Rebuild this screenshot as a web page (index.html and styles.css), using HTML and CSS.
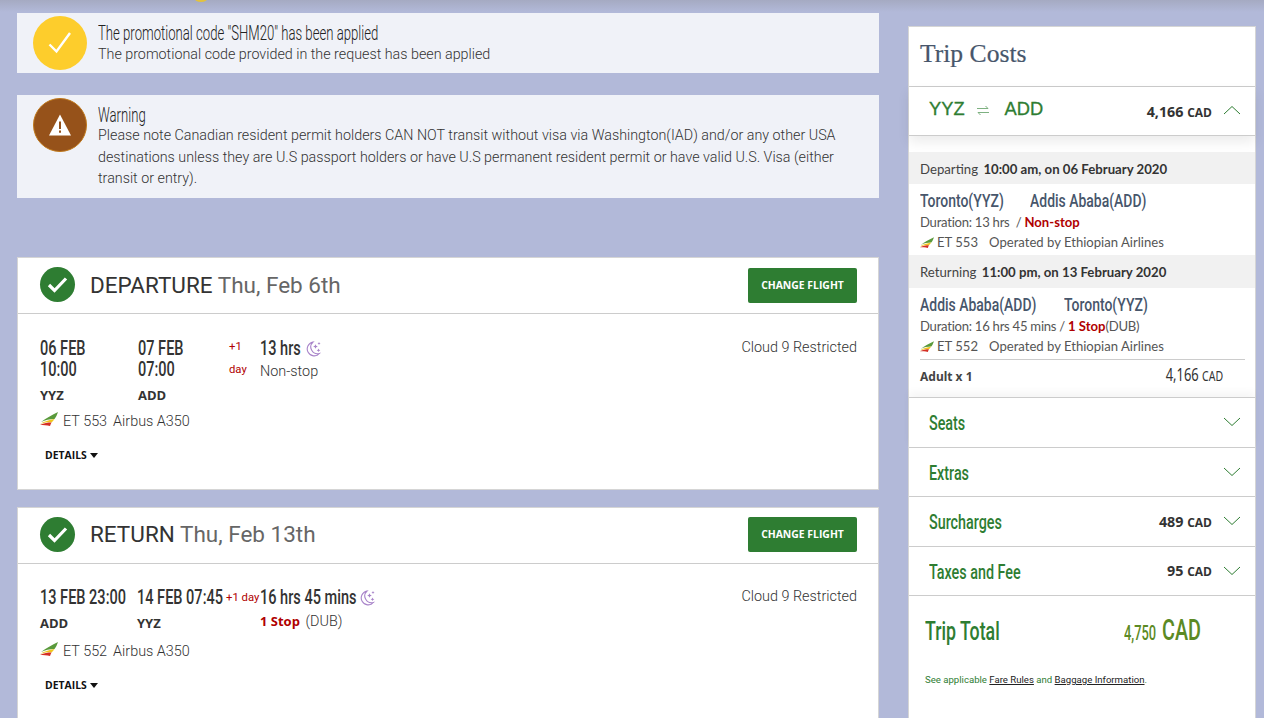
FILE: index.html
```html
<!DOCTYPE html>
<html lang="en">
<head>
    <meta charset="UTF-8">
    <meta name="viewport" content="width=device-width, initial-scale=1.0">
    <title>Review Trip</title>
    <link rel="stylesheet" href="styles.css">
</head>
<body>

<svg class="sprites" width="0" height="0" aria-hidden="true">
    <symbol id="tail" viewBox="0 0 18 15">
        <path d="M1 10C6 6 12 3 18 0C17 3 16 5 14.5 7C10 7 5 8 1 10Z" fill="#5a9a3c"/>
        <path d="M0 12C4 9.5 9 8 14.5 7C13.5 8.5 12.5 9.5 11.5 10.5C8 10 4 10.5 0 12Z" fill="#f0c61e"/>
        <path d="M0 13C4 11 8 10.5 11.5 10.5C11 11.5 10.5 12.5 10 14C7 13 3 13 0 13Z" fill="#d42e23"/>
    </symbol>
    <symbol id="moon" viewBox="0 0 16 16">
        <path d="M8 1A7 7 0 1 0 14.5 12.5A6.8 6.8 0 0 1 8 1Z" fill="none" stroke="#a883c9" stroke-width="1.1"/>
        <path d="M10.5 3.2l.7 1.6 1.6.7-1.6.7-.7 1.6-.7-1.6-1.6-.7 1.6-.7ZM14 1l.5 1 1 .5-1 .5-.5 1-.5-1-1-.5 1-.5ZM13.5 7.5l.6 1.2 1.2.6-1.2.6-.6 1.2-.6-1.2-1.2-.6 1.2-.6Z" fill="#a883c9"/>
    </symbol>
    <symbol id="tick" viewBox="0 0 35 35">
        <path d="M9 18L14.5 23.5L26 11.5" fill="none" stroke="#fff" stroke-width="3.2"/>
    </symbol>
    <symbol id="chev" viewBox="0 0 18 10">
        <path d="M1 1L9 8.5L17 1" fill="none" stroke="#2e7d32" stroke-width="1"/>
    </symbol>
</svg>

<div class="top-dot"></div>

<div class="page">
    <main class="left">
        <div class="alert">
            <span class="alert-icon promo">
                <svg width="30" height="30" viewBox="0 0 30 30"><path d="M4.5 16.5L11.5 23.5L25 5" fill="none" stroke="#fff" stroke-width="2.4"/></svg>
            </span>
            <div class="alert-text">
                <h3>The promotional code "SHM20" has been applied</h3>
                <p>The promotional code provided in the request has been applied</p>
            </div>
        </div>

        <div class="alert warn">
            <span class="alert-icon warning">
                <svg width="24" height="24" viewBox="0 0 24 24"><path d="M12 1.5L23 22.5H1Z" fill="#fff"/><path d="M11 8.5h2v7.5h-2ZM11 17.6h2v2.2h-2Z" fill="#96521a"/></svg>
            </span>
            <div class="alert-text">
                <h3>Warning</h3>
                <p class="long">Please note Canadian resident permit holders CAN NOT transit without visa via Washington(IAD) and/or any other USA destinations unless they are U.S passport holders or have U.S permanent resident permit or have valid U.S. Visa (either transit or entry).</p>
            </div>
        </div>

        <section class="flight-card">
            <div class="flight-head">
                <span class="check"><svg width="35" height="35"><use href="#tick"/></svg></span>
                <h2>DEPARTURE <span>Thu, Feb 6th</span></h2>
                <button class="change-btn">CHANGE FLIGHT</button>
            </div>
            <div class="flight-body">
                <div class="times">
                    <div>
                        <div class="cond stamp">06 FEB<br>10:00</div>
                        <div class="code">YYZ</div>
                    </div>
                    <div>
                        <div class="cond stamp">07 FEB<br>07:00</div>
                        <div class="code">ADD</div>
                    </div>
                    <div class="plus stacked">+1<br>day</div>
                    <div>
                        <div class="dur-line"><span class="cond dur dur-short">13 hrs</span><svg width="16" height="16"><use href="#moon"/></svg></div>
                        <div class="stops">Non-stop</div>
                    </div>
                    <div class="fare">Cloud 9 Restricted</div>
                </div>
                <div class="carrier"><svg width="18" height="15"><use href="#tail"/></svg><span>ET 553</span><span>Airbus A350</span></div>
                <div class="details">DETAILS <i class="caret"></i></div>
            </div>
        </section>

        <section class="flight-card second">
            <div class="flight-head">
                <span class="check"><svg width="35" height="35"><use href="#tick"/></svg></span>
                <h2>RETURN <span>Thu, Feb 13th</span></h2>
                <button class="change-btn">CHANGE FLIGHT</button>
            </div>
            <div class="flight-body ret">
                <div class="times">
                    <div>
                        <div class="cond stamp">13 FEB 23:00</div>
                        <div class="code">ADD</div>
                    </div>
                    <div>
                        <div class="cond stamp">14 FEB 07:45</div>
                        <div class="code">YYZ</div>
                    </div>
                    <div class="plus">+1 day</div>
                    <div>
                        <div class="dur-line"><span class="cond dur dur-long">16 hrs 45 mins</span><svg width="16" height="16"><use href="#moon"/></svg></div>
                        <div class="stops"><b>1 Stop</b> (DUB)</div>
                    </div>
                    <div class="fare">Cloud 9 Restricted</div>
                </div>
                <div class="carrier"><svg width="18" height="15"><use href="#tail"/></svg><span>ET 552</span><span>Airbus A350</span></div>
                <div class="details">DETAILS <i class="caret"></i></div>
            </div>
        </section>
    </main>

    <aside class="costs">
        <h2 class="costs-title">Trip Costs</h2>
        <div class="route-row">
            <span class="route">YYZ</span>
            <svg class="swap" width="12" height="11" viewBox="0 0 12 11"><path d="M0 3.5H11M8.5 1L11 3.5M12 7.5H1M3.5 10L1 7.5" fill="none" stroke="#6fa873" stroke-width="0.9"/></svg>
            <span class="route">ADD</span>
            <span class="amount">4,166 <small>CAD</small></span>
            <svg class="chev up" width="18" height="10"><use href="#chev"/></svg>
        </div>

        <div class="itinerary">
            <div class="band">Departing <b>10:00 am, on 06 February 2020</b></div>
            <div class="leg">
                <div class="cities"><span class="cond city-short">Toronto(YYZ)</span><span class="cond city-long">Addis Ababa(ADD)</span></div>
                <div class="leg-line time-line">Duration: 13 hrs &nbsp;/ <b>Non-stop</b></div>
                <div class="leg-line op"><svg width="14" height="12"><use href="#tail"/></svg><span>ET 553</span><span>Operated by Ethiopian Airlines</span></div>
            </div>
            <div class="band back">Returning <b>11:00 pm, on 13 February 2020</b></div>
            <div class="leg">
                <div class="cities"><span class="cond city-long">Addis Ababa(ADD)</span><span class="cond city-short">Toronto(YYZ)</span></div>
                <div class="leg-line time-line">Duration: 16 hrs 45 mins / <b>1 Stop</b>(DUB)</div>
                <div class="leg-line op"><svg width="14" height="12"><use href="#tail"/></svg><span>ET 552</span><span>Operated by Ethiopian Airlines</span></div>
            </div>
            <div class="adult">
                <b>Adult x 1</b>
                <span class="cond adult-price">4,166 <small>CAD</small></span>
            </div>
        </div>

        <div class="cost-row first"><span class="cond cost-label">Seats</span><svg class="chev" width="18" height="10"><use href="#chev"/></svg></div>
        <div class="cost-row"><span class="cond cost-label">Extras</span><svg class="chev" width="18" height="10"><use href="#chev"/></svg></div>
        <div class="cost-row"><span class="cond cost-label">Surcharges</span><span class="amount">489 <small>CAD</small></span><svg class="chev" width="18" height="10"><use href="#chev"/></svg></div>
        <div class="cost-row"><span class="cond cost-label">Taxes and Fee</span><span class="amount">95 <small>CAD</small></span><svg class="chev" width="18" height="10"><use href="#chev"/></svg></div>

        <div class="total">
            <span class="total-label-box"><span class="cond total-label">Trip Total</span></span>
            <span class="cond total-value">4,750 <big>CAD</big></span>
        </div>
        <p class="rules">See applicable <a href="#">Fare Rules</a> and <a href="#">Baggage Information</a>.</p>
    </aside>
</div>

</body>
</html>
```

FILE: styles.css
```css
html, body {
    margin: 0;
    padding: 0;
    height: 718px;
    overflow: hidden;
}
body {
    background: #b2b9d9;
    font-family: Roboto, "Liberation Sans", sans-serif;
    color: #333;
    position: relative;
}
body::before {
    content: "";
    position: absolute;
    top: 0;
    left: 0;
    right: 0;
    height: 12px;
    background: linear-gradient(to bottom, #a5aac2, #b2b9d9);
}
.sprites {
    position: absolute;
}
.top-dot {
    position: absolute;
    top: -7px;
    left: 194px;
    width: 14px;
    height: 9px;
    border-radius: 50%;
    background: #e2c23e;
}
.page {
    display: flex;
    align-items: flex-start;
    height: 718px;
    box-sizing: border-box;
    overflow: hidden;
    padding: 13px 8px 0 17px;
    position: relative;
}
.left {
    width: 862px;
    flex: none;
}

/* no condensed face is installed, so narrow the regular one */
.cond {
    display: inline-block;
    font-weight: 500;
    white-space: nowrap;
    transform: scaleX(0.745);
    transform-origin: left center;
}

/* alerts */
.alert {
    display: flex;
    background: #f0f2f8;
    height: 60px;
    margin-bottom: 22px;
}
.alert.warn {
    height: 103px;
    margin-bottom: 59px;
}
.alert-icon {
    width: 54px;
    height: 54px;
    border-radius: 50%;
    margin: 3px 0 0 16px;
    flex: none;
    display: flex;
    align-items: center;
    justify-content: center;
}
.promo {
    background: #fdcd2c;
}
.warning {
    background: #96521a;
    border: 1px solid #c0791c;
    box-sizing: border-box;
}
.alert-text {
    margin-left: 11px;
}
.alert-text h3 {
    margin: 8px 0 0;
    font-size: 20px;
    font-weight: 300;
    line-height: 24px;
    color: #222;
    white-space: nowrap;
    transform: scaleX(0.657);
    transform-origin: left center;
}
.alert-text p {
    margin: 0;
    font-size: 14.3px;
    line-height: 19px;
    color: #333;
    font-weight: 300;
}
.alert-text p.long {
    line-height: 21.5px;
    width: 765px;
    margin-top: -2px;
}
.warn h3 {
    margin-top: 9px;
    line-height: 23px;
}

/* flight cards */
.flight-card {
    background: #fff;
    border: 1px solid #d5d5d5;
    box-sizing: border-box;
    height: 233px;
    margin-bottom: 17px;
}
.flight-card.second {
    height: 211px;
    margin-bottom: 0;
    border-bottom: none;
}
.flight-head {
    display: flex;
    align-items: center;
    height: 53px;
    padding: 0 21px 2px 22px;
    border-bottom: 1px solid #ccc;
}
.check {
    width: 35px;
    height: 35px;
    border-radius: 50%;
    background: #2e7d32;
    flex: none;
}
.flight-head h2 {
    margin: 0 0 0 15px;
    font-size: 22.5px;
    font-weight: 400;
    color: #333;
    flex: 1;
}
.second .flight-head h2 {
    margin-top: -2px;
}
.flight-head h2 span {
    color: #666;
}
.change-btn {
    background: #2e7d32;
    color: #fff;
    border: none;
    border-radius: 2px;
    width: 109px;
    height: 35px;
    margin-top: 1px;
    padding: 0;
    font: 700 10.4px "Open Sans", sans-serif;
}
.second .change-btn {
    margin-top: -1px;
}
.flight-body {
    padding: 24px 21px 0 22px;
}
.flight-body.ret {
    padding-top: 23px;
}
.times {
    display: grid;
    grid-template-columns: 98px 90px 32px 1fr auto;
}
.ret .times {
    grid-template-columns: 97px 89px 34px 1fr auto;
}
.stamp, .dur {
    font-size: 19.5px;
    line-height: 21px;
    color: #333;
}
.code {
    font: 700 13px/16px "Open Sans", sans-serif;
    margin-top: 7px;
}
.plus {
    color: #b00000;
    font-size: 11.3px;
    line-height: 21px;
}
.plus.stacked {
    line-height: 22.5px;
    margin-top: -2px;
    padding-left: 1px;
}
.dur-line {
    display: flex;
    align-items: center;
}
.dur-short {
    width: 45px;
}
.dur-long {
    width: 99px;
}
.stops {
    font-size: 14.4px;
    font-weight: 300;
    line-height: 20px;
    margin-top: 3px;
}
.ret .stops {
    margin-top: 4px;
}
.stops b {
    color: #b00000;
    font: 700 13px "Open Sans", sans-serif;
    margin-right: 2px;
}
.fare {
    font-size: 14.4px;
    font-weight: 300;
    line-height: 20px;
}
.carrier {
    display: flex;
    align-items: center;
    gap: 6px;
    font-size: 14.4px;
    font-weight: 300;
    height: 20px;
    margin-top: 8px;
}
.carrier svg {
    margin: -4px -1px 0 0;
}
.ret .carrier {
    margin-top: 9px;
}
.details {
    font: 700 10.4px "Open Sans", sans-serif;
    color: #111;
    margin: 17px 0 0 5px;
}
.caret {
    display: inline-block;
    border: 4px solid transparent;
    border-top: 5px solid #111;
    border-bottom: 0;
    vertical-align: 1px;
    margin-left: 1px;
}

/* trip costs */
.costs {
    width: 348px;
    margin: 13px 0 0 29px;
    background: #fff;
    border: 1px solid #d5d5d5;
    border-bottom: none;
    box-sizing: border-box;
    height: 692px;
    flex: none;
}
.costs-title {
    margin: 0;
    height: 59px;
    padding-left: 11px;
    font: 400 25.6px/53px "Liberation Serif", serif;
    color: #47566b;
    -webkit-text-stroke: 0.2px #47566b;
    border-bottom: 1px solid #ccc;
}
.route-row {
    display: flex;
    align-items: center;
    height: 48px;
    padding: 0 14px 0 20px;
    border-bottom: 1px solid #ccc;
    box-shadow: 0 6px 12px rgba(0, 0, 0, 0.08);
    position: relative;
}
.route {
    font: 400 18.3px "Liberation Sans", sans-serif;
    color: #2e7d32;
    -webkit-text-stroke: 0.3px #2e7d32;
    margin-top: -5px;
}
.swap {
    margin: -2px 16px 0 12px;
}
.amount {
    margin-left: auto;
    font: 700 14.3px "Open Sans", sans-serif;
    color: #333;
}
.amount small {
    font-size: 12px;
}
.chev {
    margin-left: 11px;
}
.chev.up {
    transform: rotate(180deg);
    margin-top: -3px;
}
.itinerary {
    padding-top: 16px;
}
.band {
    background: #f1f1f1;
    height: 32px;
    padding-left: 11px;
    font: 400 13.2px/34px Lato, sans-serif;
    color: #444;
}
.band.back {
    height: 33px;
}
.band b {
    margin-left: 2px;
    color: #333;
}
.leg {
    padding: 6px 0 0 11px;
    height: 65px;
}
.cities {
    display: flex;
    gap: 26px;
}
.cities .cond {
    font-size: 18.5px;
    line-height: 22px;
    color: #47566b;
    transform: scaleX(0.755);
}
.city-short {
    width: 84px;
}
.city-long {
    width: 118px;
}
.leg-line {
    font: 400 13.1px/19px Lato, sans-serif;
    color: #555;
    margin-top: 1px;
}
.time-line {
    letter-spacing: -0.26px;
}
.leg-line b {
    color: #b00000;
    letter-spacing: 0;
}
.op {
    display: flex;
    align-items: center;
    gap: 3px;
}
.op span + span {
    margin-left: 8px;
}
.adult {
    display: flex;
    justify-content: space-between;
    align-items: center;
    margin: 0 10px 0 11px;
    padding-right: 22px;
    border-top: 1px solid #ccc;
    height: 33px;
    box-sizing: border-box;
    font: 400 12px "Noto Sans", sans-serif;
    color: #444;
}
.adult-price {
    font-size: 18.5px;
    font-weight: 400;
    color: #333;
    margin-top: -5px;
    transform: scaleX(0.7);
    transform-origin: right center;
}
.adult-price small {
    font-size: 15px;
}
.cost-row {
    display: flex;
    align-items: center;
    height: 48.5px;
    padding: 0 14px 0 20px;
    border-bottom: 1px solid #ccc;
}
.cost-row.first {
    border-top: 1px solid #ccc;
    margin-top: 5px;
    box-shadow: 0 -5px 8px rgba(0, 0, 0, 0.04);
}
.cost-label {
    font-size: 19.5px;
    color: #2e7d32;
    margin-top: 3px;
    transform: scaleX(0.735);
}
.cost-row .chev:nth-child(2) {
    margin-left: auto;
}
.total {
    display: flex;
    align-items: center;
    padding-left: 16px;
    height: 70px;
}
.total-label-box {
    width: 199px;
}
.total-label {
    font-size: 25px;
    color: #2e7d32;
    transform: scaleX(0.71);
}
.total-value {
    font-size: 19.5px;
    color: #5c8a24;
    margin-top: -3px;
    transform: scaleX(0.66);
}
.total-value big {
    font-size: 30px;
    margin-left: 4px;
}
.rules {
    margin: 7px 0 0;
    padding-left: 16px;
    font-size: 9.6px;
    color: #2e7d32;
    line-height: 14px;
}
.rules a {
    color: #222;
    text-decoration: underline;
}
```
